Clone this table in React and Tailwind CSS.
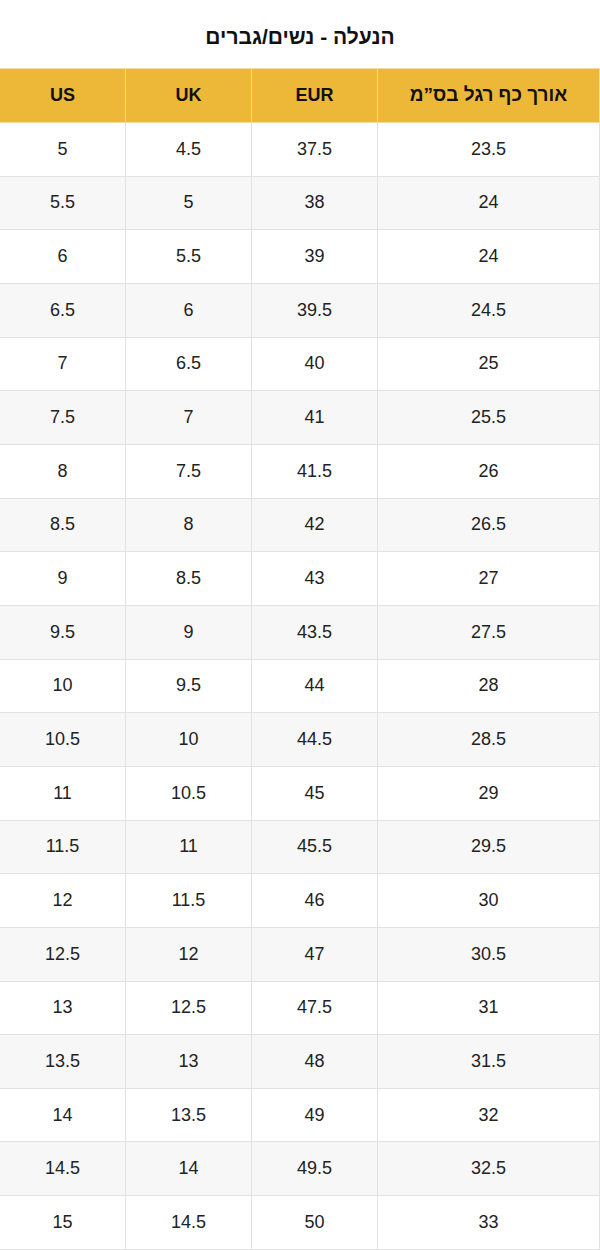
const rows = [
  ["23.5", "37.5", "4.5", "5"],
  ["24", "38", "5", "5.5"],
  ["24", "39", "5.5", "6"],
  ["24.5", "39.5", "6", "6.5"],
  ["25", "40", "6.5", "7"],
  ["25.5", "41", "7", "7.5"],
  ["26", "41.5", "7.5", "8"],
  ["26.5", "42", "8", "8.5"],
  ["27", "43", "8.5", "9"],
  ["27.5", "43.5", "9", "9.5"],
  ["28", "44", "9.5", "10"],
  ["28.5", "44.5", "10", "10.5"],
  ["29", "45", "10.5", "11"],
  ["29.5", "45.5", "11", "11.5"],
  ["30", "46", "11.5", "12"],
  ["30.5", "47", "12", "12.5"],
  ["31", "47.5", "12.5", "13"],
  ["31.5", "48", "13", "13.5"],
  ["32", "49", "13.5", "14"],
  ["32.5", "49.5", "14", "14.5"],
  ["33", "50", "14.5", "15"],
];

export default function App() {
  return (
    <div
      className="w-[600px] bg-white text-[#222]"
      style={{ fontFamily: '"Liberation Sans", Arial, sans-serif' }}
      dir="rtl"
    >
      <div className="h-[68px] flex items-center justify-center pt-[6px]">
        <h2 className="text-[21px] font-bold text-[#111]">הנעלה - נשים/גברים</h2>
      </div>
      <table className="w-[600px] border-collapse table-fixed">
        <colgroup>
          <col className="w-[222px]" />
          <col className="w-[126px]" />
          <col className="w-[126px]" />
          <col className="w-[126px]" />
        </colgroup>
        <thead>
          <tr className="h-[54px] bg-[#edb837]">
            {["אורך כף רגל בס”מ", "EUR", "UK", "US"].map((h, i) => (
              <th
                key={i}
                className={
                  i === 0
                    ? "border border-[#f0dca0] text-center text-[19px] font-bold text-[#111] p-0"
                    : "border border-[#f0dca0] text-center text-[18px] font-bold text-[#111] p-0"
                }
              >
                {h}
              </th>
            ))}
          </tr>
        </thead>
        <tbody>
          {rows.map((r, ri) => (
            <tr
              key={ri}
              className={ri % 2 === 1 ? "h-[53.67px] bg-[#f7f7f7]" : "h-[53.67px] bg-white"}
            >
              {r.map((c, ci) => (
                <td
                  key={ci}
                  className="border border-[#e2e2e2] text-center text-[18px] p-0"
                >
                  {c}
                </td>
              ))}
            </tr>
          ))}
        </tbody>
      </table>
    </div>
  );
}
